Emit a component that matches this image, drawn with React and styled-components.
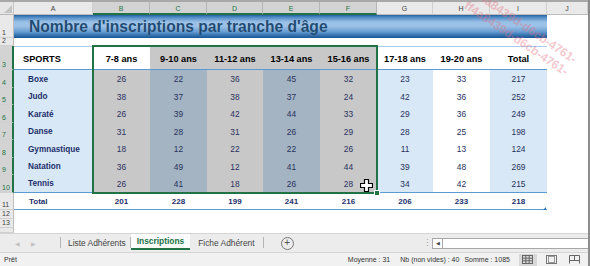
import React from 'react';
import styled, { createGlobalStyle, css } from 'styled-components';

const Global = createGlobalStyle`
  html, body { margin: 0; padding: 0; background: #fff; }
  body { font-family: "Liberation Sans", Arial, sans-serif; overflow: hidden; }
  #root { width: 590px; height: 266px; }
`;

const GREEN = '#217346';
const LINE_BLUE = '#5b9bd5';
const COLS = '14px 79px 57px 57px 56px 57px 57px 56px 57px 57px 1fr';
const ROWS = '13px 23px 8px 24px 18px 17px 18px 17px 18px 17px 18px 17px 9px 9px 1fr';

const Window = styled.div`
  position: relative;
  width: 590px;
  height: 266px;
  display: flex;
  flex-direction: column;
  overflow: hidden;
  background: #fff;
  box-sizing: border-box;
  border-right: 2px solid #8c8c8c;
`;

const TopStrip = styled.div`
  flex: none;
  height: 2px;
  background: #a8a8a8;
`;

const SheetStack = styled.div`
  flex: none;
  height: 231px;
  display: grid;
  overflow: hidden;
`;

const Sheet = styled.div`
  grid-area: 1 / 1;
  display: grid;
  grid-template-columns: ${COLS};
  grid-template-rows: ${ROWS};
  overflow: hidden;
`;

const OverlayGrid = styled.div`
  grid-area: 1 / 1;
  display: grid;
  grid-template-columns: ${COLS};
  grid-template-rows: ${ROWS};
  pointer-events: none;
  z-index: 2;
`;

const Corner = styled.div`
  background: #e6e6e6;
  border-right: 1px solid #c6c6c6;
  border-bottom: 1px solid #b8b8b8;
  box-sizing: border-box;
  display: flex;
  align-items: flex-end;
  justify-content: flex-end;
  padding: 0 1px 1px 0;
  &::after {
    content: '';
    width: 0;
    height: 0;
    border-left: 8px solid transparent;
    border-bottom: 8px solid #c4c4c4;
  }
`;

const ColHead = styled.div`
  box-sizing: border-box;
  background: ${p => (p.$sel ? '#d3d3d3' : '#e9e9e9')};
  color: ${p => (p.$sel ? GREEN : '#444')};
  border-right: 1px solid ${p => (p.$sel ? '#b5b5b5' : '#d0d0d0')};
  border-bottom: ${p => (p.$sel ? `2px solid ${GREEN}` : '1px solid #bdbdbd')};
  font-size: 7px;
  display: flex;
  align-items: center;
  justify-content: center;
  padding-top: ${p => (p.$sel ? '1px' : '0')};
`;

const RowHead = styled.div`
  box-sizing: border-box;
  background: ${p => (p.$sel ? '#d3d3d3' : '#e9e9e9')};
  color: ${p => (p.$sel ? GREEN : '#444')};
  border-right: ${p => (p.$sel ? `2px solid ${GREEN}` : '1px solid #bdbdbd')};
  border-bottom: 1px solid #d0d0d0;
  font-size: 7px;
  display: flex;
  align-items: flex-end;
  justify-content: flex-start;
  padding: 0 0 1px 2px;
  line-height: 1;
  overflow: hidden;
`;

const TitleCell = styled.div`
  grid-column: 2 / 11;
  box-sizing: border-box;
  background: linear-gradient(
    to bottom,
    #24609d 0%,
    #4b88c4 9%,
    #99c0e6 30%,
    #9dc2e7 48%,
    #6a9fd4 72%,
    #3472b0 88%,
    #1b5592 100%
  );
  display: flex;
  align-items: center;
  padding: 1px 0 0 15px;
  font-weight: bold;
  font-size: 15.6px;
  color: #214b72;
  text-shadow: 0 0 1px rgba(255, 255, 255, 0.3);
  white-space: nowrap;
`;

const cellFill = (sel, blue) => {
  if (sel && blue) return '#a4b4c2';
  if (sel) return '#c8c8c8';
  if (blue) return '#d8e8f6';
  return '#ffffff';
};

const Cell = styled.div`
  position: relative;
  box-sizing: border-box;
  background: ${p => cellFill(p.$sel, p.$blue)};
  display: flex;
  align-items: center;
  justify-content: ${p => (p.$left ? 'flex-start' : 'center')};
  padding-left: ${p => p.$pad || 0}px;
  white-space: nowrap;
  overflow: visible;
  ${p => p.$topLine && css`border-top: 1px solid ${p.$sel ? '#9aa7b3' : '#a9cbea'};`}
  ${p => p.$bottomLine && css`border-bottom: 1px solid ${LINE_BLUE};`}
  ${p => p.$kind === 'head' && css`
    font-weight: bold;
    font-size: 9.2px;
    color: #000;
    padding-top: 1px;
  `}
  ${p => p.$kind === 'name' && css`
    font-weight: bold;
    font-size: 8.2px;
    color: #1d2f6b;
  `}
  ${p => p.$kind === 'num' && css`
    font-size: 8.4px;
    color: #28325e;
  `}
  ${p => p.$kind === 'total' && css`
    font-weight: bold;
    font-size: 8px;
    color: #1d2f6b;
  `}
  ${p => p.$tableEnd && css`
    &::after {
      content: '';
      position: absolute;
      right: 1px;
      bottom: -1px;
      width: 0;
      height: 0;
      border-left: 3px solid transparent;
      border-bottom: 3px solid #2e75b6;
    }
  `}
`;

const Selection = styled.div`
  grid-column: 3 / 8;
  grid-row: 4 / 12;
  position: relative;
  margin: -1px;
  border: 2px solid ${GREEN};
`;

const FillHandle = styled.div`
  position: absolute;
  right: -4px;
  bottom: -4px;
  width: 4px;
  height: 4px;
  background: ${GREEN};
  border: 1px solid #fff;
`;

const Cursor = styled.svg`
  position: absolute;
  right: 3px;
  bottom: 0px;
  width: 13px;
  height: 13px;
`;

const TabBar = styled.div`
  flex: none;
  height: 19px;
  box-sizing: border-box;
  background: #ececec;
  border-top: 1px solid #d4d4d4;
  display: flex;
  align-items: stretch;
  font-size: 8.4px;
  color: #444;
`;

const NavArrows = styled.div`
  width: 60px;
  display: flex;
  align-items: center;
  gap: 11px;
  padding-left: 15px;
  box-sizing: border-box;
  color: #c2c2c2;
  font-size: 6px;
`;

const Sep = styled.div`
  width: 1px;
  margin: 3px 0 4px;
  background: #b4b4b4;
`;

const Tab = styled.div`
  display: flex;
  align-items: center;
  padding: 0 ${p => p.$pr}px 1px ${p => p.$pl}px;
  box-sizing: border-box;
  white-space: nowrap;
  ${p => p.$active && css`
    background: #fbfbfb;
    color: ${GREEN};
    font-weight: bold;
    border-bottom: 2px solid ${GREEN};
    margin-bottom: 2px;
    padding-bottom: 0;
  `}
`;

const AddBtn = styled.div`
  width: 11px;
  height: 11px;
  align-self: center;
  margin-left: 17px;
  border: 1px solid #777;
  border-radius: 50%;
  display: flex;
  align-items: center;
  justify-content: center;
  color: #555;
  font-size: 10px;
  line-height: 1;
`;

const Spacer = styled.div`
  flex: 1;
`;

const Grip = styled.div`
  width: 10px;
  display: flex;
  align-items: center;
  justify-content: center;
  color: #a0a0a0;
  font-size: 9px;
`;

const HScroll = styled.div`
  width: 158px;
  align-self: center;
  height: 11px;
  box-sizing: border-box;
  border: 1px solid #a8a8a8;
  background: #fff;
  display: flex;
  margin-right: -2px;
`;

const ScrollBtn = styled.div`
  width: 9px;
  border-right: 1px solid #a8a8a8;
  display: flex;
  align-items: center;
  justify-content: center;
  color: #444;
  font-size: 5px;
`;

const StatusBar = styled.div`
  flex: 1;
  box-sizing: border-box;
  background: #f1f1f1;
  border-top: 1px solid #d6d6d6;
  display: flex;
  align-items: center;
  padding-left: 4px;
  font-size: 7px;
  color: #333;
  white-space: nowrap;
`;

const StatusItem = styled.span`
  margin-left: ${p => p.$ml || 0}px;
`;

const ViewBtn = styled.div`
  width: 18px;
  height: 12px;
  margin-left: ${p => p.$ml || 0}px;
  display: flex;
  align-items: center;
  justify-content: center;
  background: ${p => (p.$active ? '#d8d8d8' : 'transparent')};
`;

const Watermark = styled.div`
  position: absolute;
  left: 478px;
  top: -14px;
  transform: rotate(34deg);
  transform-origin: left top;
  color: rgba(226, 112, 128, 0.4);
  font-size: 12px;
  font-weight: bold;
  line-height: 15px;
  pointer-events: none;
  white-space: nowrap;
  z-index: 5;
`;

const cols = ['A', 'B', 'C', 'D', 'E', 'F', 'G', 'H', 'I', 'J'];
const heads = ['7-8 ans', '9-10 ans', '11-12 ans', '13-14 ans', '15-16 ans', '17-18 ans', '19-20 ans', 'Total'];
const data = [
  ['Boxe', [26, 22, 36, 45, 32, 23, 33, 217]],
  ['Judo', [38, 37, 38, 37, 24, 42, 36, 252]],
  ['Karaté', [26, 39, 42, 44, 33, 29, 36, 249]],
  ['Danse', [31, 28, 31, 26, 29, 28, 25, 198]],
  ['Gymnastique', [18, 12, 22, 22, 26, 11, 13, 124]],
  ['Natation', [36, 49, 12, 41, 44, 39, 48, 269]],
  ['Tennis', [26, 41, 18, 26, 28, 34, 42, 215]],
];
const totals = [201, 228, 199, 241, 216, 206, 233, 218];

const isBlueCol = c => c % 2 === 0 && c <= 8; // A, C, E, G, I
const isSelCol = c => c >= 1 && c <= 5;

function GridIcon() {
  return (
    <svg width="11" height="9" viewBox="0 0 11 9">
      <rect x="0.5" y="0.5" width="10" height="8" fill="none" stroke="#666" />
      <path d="M0.5 3.2H10.5M0.5 5.8H10.5M3.8 0.5V8.5M7.2 0.5V8.5" stroke="#666" />
    </svg>
  );
}
function PageIcon() {
  return (
    <svg width="11" height="9" viewBox="0 0 11 9">
      <rect x="0.5" y="0.5" width="10" height="8" fill="none" stroke="#777" />
      <rect x="2.5" y="1.5" width="6" height="6" fill="none" stroke="#999" />
    </svg>
  );
}
function BreakIcon() {
  return (
    <svg width="11" height="9" viewBox="0 0 11 9">
      <path d="M0.5 8.5V0.5H10.5V8.5M0.5 5.5H10.5M5.5 0.5V5.5" fill="none" stroke="#666" />
    </svg>
  );
}

export default function App() {
  return (
    <>
      <Global />
      <Window>
        <TopStrip />
        <SheetStack>
          <Sheet>
            <Corner />
            {cols.map((c, i) => (
              <ColHead key={c} $sel={i >= 1 && i <= 5}>{c}</ColHead>
            ))}

            <RowHead>1</RowHead>
            <TitleCell>Nombre d'inscriptions par tranche d'âge</TitleCell>
            <Cell />

            <RowHead>2</RowHead>
            {cols.map(c => <Cell key={'r2' + c} />)}

            <RowHead $sel>3</RowHead>
            <Cell $kind="head" $left $pad={9} $topLine $bottomLine>SPORTS</Cell>
            {heads.map((h, i) => {
              const c = i + 1;
              const sel = isSelCol(c) && c !== 1;
              return (
                <Cell key={h} $kind="head" $sel={sel} $topLine $bottomLine>{h}</Cell>
              );
            })}
            <Cell />

            {data.map(([name, vals], r) => {
              const last = r === data.length - 1;
              return (
                <React.Fragment key={name}>
                  <RowHead $sel>{r + 4}</RowHead>
                  <Cell $kind="name" $left $pad={14} $blue $bottomLine={last}>{name}</Cell>
                  {vals.map((v, i) => {
                    const c = i + 1;
                    return (
                      <Cell key={c} $kind="num" $blue={isBlueCol(c)} $sel={isSelCol(c)} $bottomLine={last}>
                        {v}
                      </Cell>
                    );
                  })}
                  <Cell />
                </React.Fragment>
              );
            })}

            <RowHead>11</RowHead>
            <Cell $kind="total" $left $pad={15} $bottomLine>Total</Cell>
            {totals.map((v, i) => (
              <Cell key={'t' + i} $kind="total" $bottomLine $tableEnd={i === 7}>{v}</Cell>
            ))}
            <Cell />

            {[12, 13, 14].map(n => (
              <React.Fragment key={n}>
                <RowHead>{n === 14 ? '' : n}</RowHead>
                {cols.map(c => <Cell key={n + c} />)}
              </React.Fragment>
            ))}
          </Sheet>

          <OverlayGrid>
            <Selection>
              <FillHandle />
              <Cursor viewBox="0 0 13 13">
                <path
                  d="M4.5 0.5H8.5V4.5H12.5V8.5H8.5V12.5H4.5V8.5H0.5V4.5H4.5Z"
                  fill="#fff"
                  stroke="#000"
                  strokeWidth="1.2"
                />
              </Cursor>
            </Selection>
          </OverlayGrid>
        </SheetStack>

        <TabBar>
          <NavArrows>
            <span>◀</span>
            <span>▶</span>
          </NavArrows>
          <Sep />
          <Tab $pl={7} $pr={4}>Liste Adhérents</Tab>
          <Sep />
          <Tab $active $pl={6} $pr={6}>Inscriptions</Tab>
          <Tab $pl={8} $pr={8}>Fiche Adhérent</Tab>
          <Sep />
          <AddBtn>+</AddBtn>
          <Spacer />
          <Grip>⋮</Grip>
          <HScroll>
            <ScrollBtn>◀</ScrollBtn>
          </HScroll>
        </TabBar>

        <StatusBar>
          <StatusItem>Prêt</StatusItem>
          <StatusItem $ml={331}>Moyenne : 31</StatusItem>
          <StatusItem $ml={10}>Nb (non vides) : 40</StatusItem>
          <StatusItem $ml={5}>Somme : 1085</StatusItem>
          <ViewBtn $ml={9} $active><GridIcon /></ViewBtn>
          <ViewBtn $ml={6}><PageIcon /></ViewBtn>
          <ViewBtn $ml={5}><BreakIcon /></ViewBtn>
        </StatusBar>

        <Watermark>
          <div>ff4a8439d-d6cb-4761-</div>
          <div>ff4a8439d-d6cb-4761-</div>
        </Watermark>
      </Window>
    </>
  );
}
